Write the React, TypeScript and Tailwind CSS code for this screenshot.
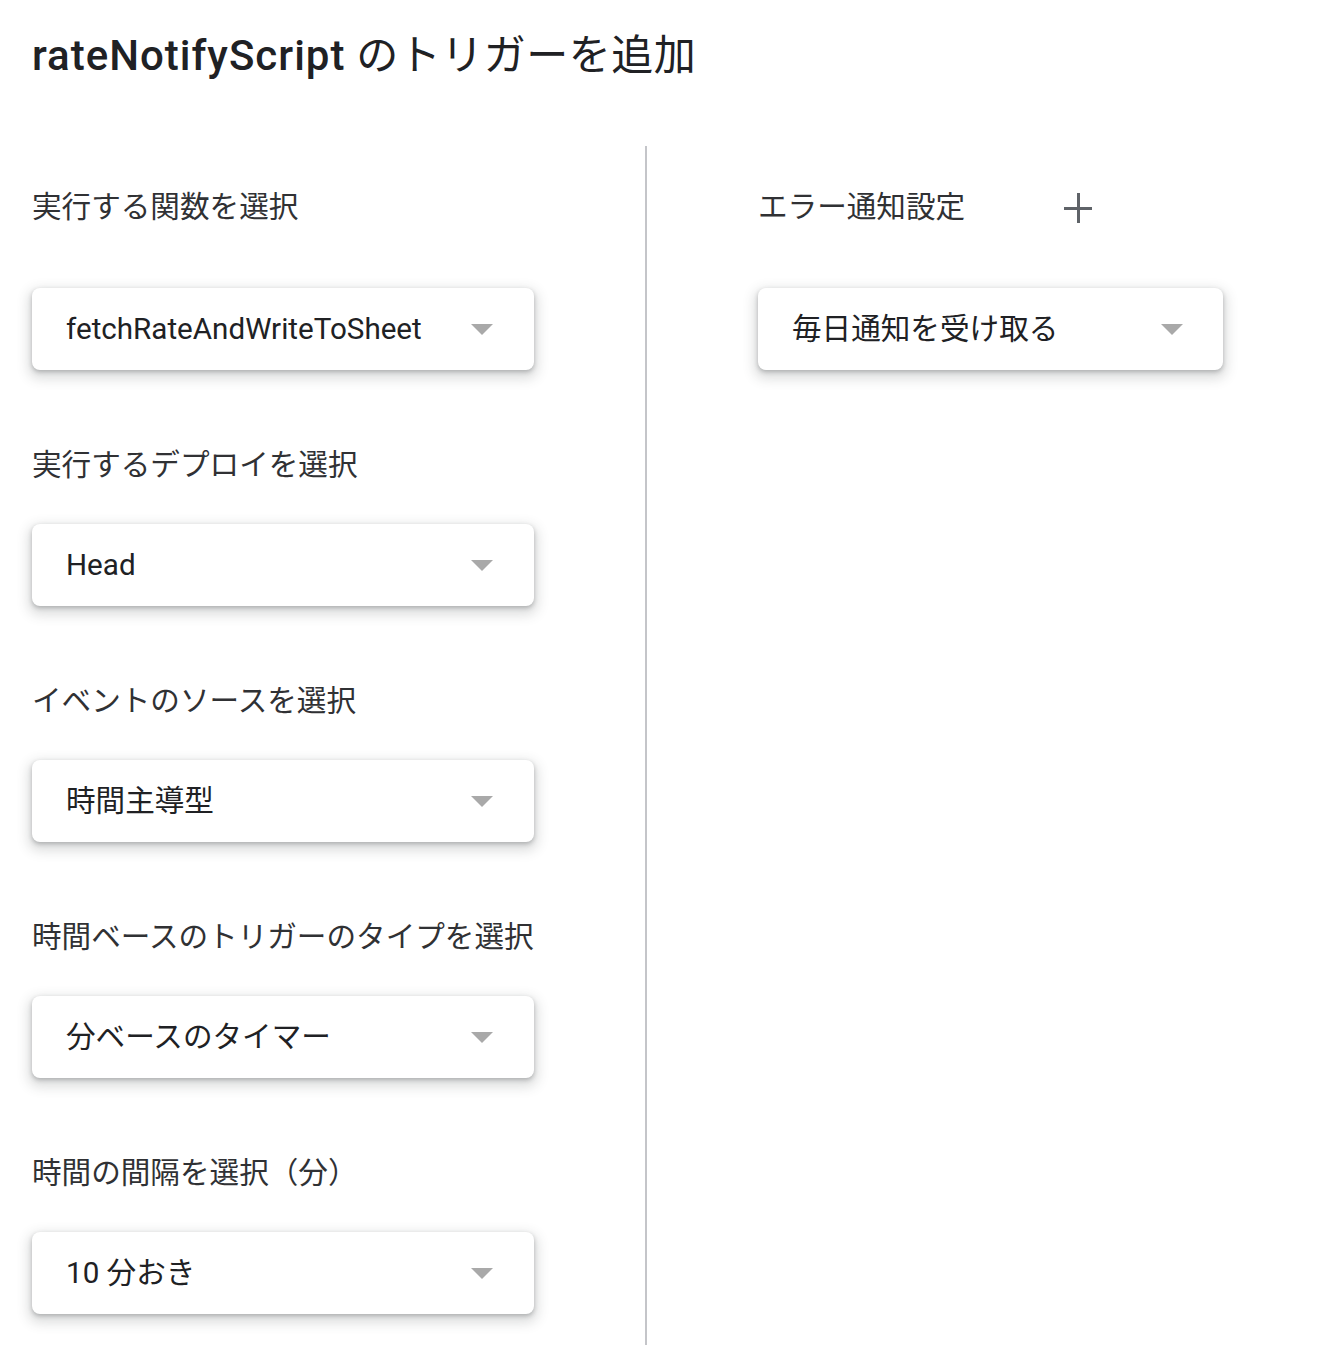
import React from "react";

const FONT = "font-['Roboto','Noto_Sans_CJK_JP',sans-serif]";

function Arrow() {
  return (
    <svg width="22" height="11" viewBox="0 0 22 11" className="shrink-0">
      <path d="M0 0 L22 0 L11 11 Z" fill="#a9a9a9" />
    </svg>
  );
}

function Dropdown({ value, width, pr }: { value: string; width: string; pr: string }) {
  return (
    <div
      className={`${width} ${pr} h-[82px] flex items-center justify-between pl-[34px] bg-white rounded-[8px] shadow-[0_2px_4px_rgba(60,64,67,0.3),0_5px_12px_4px_rgba(60,64,67,0.17)]`}
    >
      <span className="text-[29.6px] leading-[40px] text-[#202124] whitespace-nowrap">{value}</span>
      <Arrow />
    </div>
  );
}

function Label({ children }: { children: React.ReactNode }) {
  return (
    <div className="text-[29.6px] leading-[40px] text-[#303134] whitespace-nowrap">{children}</div>
  );
}

const sections = [
  { label: "実行するデプロイを選択", value: "Head" },
  { label: "イベントのソースを選択", value: "時間主導型" },
  { label: "時間ベースのトリガーのタイプを選択", value: "分ベースのタイマー" },
  { label: "時間の間隔を選択（分）", value: "10 分おき" },
];

export default function App() {
  return (
    <div className={`min-h-screen bg-white pl-8 pt-[30px] ${FONT}`}>
      <h1 className="text-[42px] leading-[52px] text-[#202124] whitespace-nowrap">
        <span className="font-medium tracking-[1px]">rateNotifyScript</span>
        <span className="font-normal tracking-[0.5px]"> のトリガーを追加</span>
      </h1>

      <div className="flex mt-[64px]">
        <div className="w-[502px] pt-[41px] pb-[31px] flex flex-col">
          <Label>実行する関数を選択</Label>
          <div className="mt-[61px]">
            <Dropdown value="fetchRateAndWriteToSheet" width="w-[502px]" pr="pr-[41px]" />
          </div>
          {sections.map((s) => (
            <div key={s.label} className="mt-[75px] flex flex-col">
              <Label>{s.label}</Label>
              <div className="mt-[39px]">
                <Dropdown value={s.value} width="w-[502px]" pr="pr-[41px]" />
              </div>
            </div>
          ))}
        </div>

        <div className="w-[2px] bg-[#c4c5c9] ml-[111px] mr-[111px] self-stretch" />

        <div className="w-[465px] pt-[41px] flex flex-col">
          <div className="flex items-center">
            <Label>エラー通知設定</Label>
            <svg width="28" height="30" viewBox="0 0 28 30" className="ml-[99px] mt-[2px]">
              <rect x="13" y="0" width="3" height="30" fill="#5f6368" />
              <rect x="0" y="14" width="28" height="3" fill="#5f6368" />
            </svg>
          </div>
          <div className="mt-[61px]">
            <Dropdown value="毎日通知を受け取る" width="w-[465px]" pr="pr-[40px]" />
          </div>
        </div>
      </div>
    </div>
  );
}
